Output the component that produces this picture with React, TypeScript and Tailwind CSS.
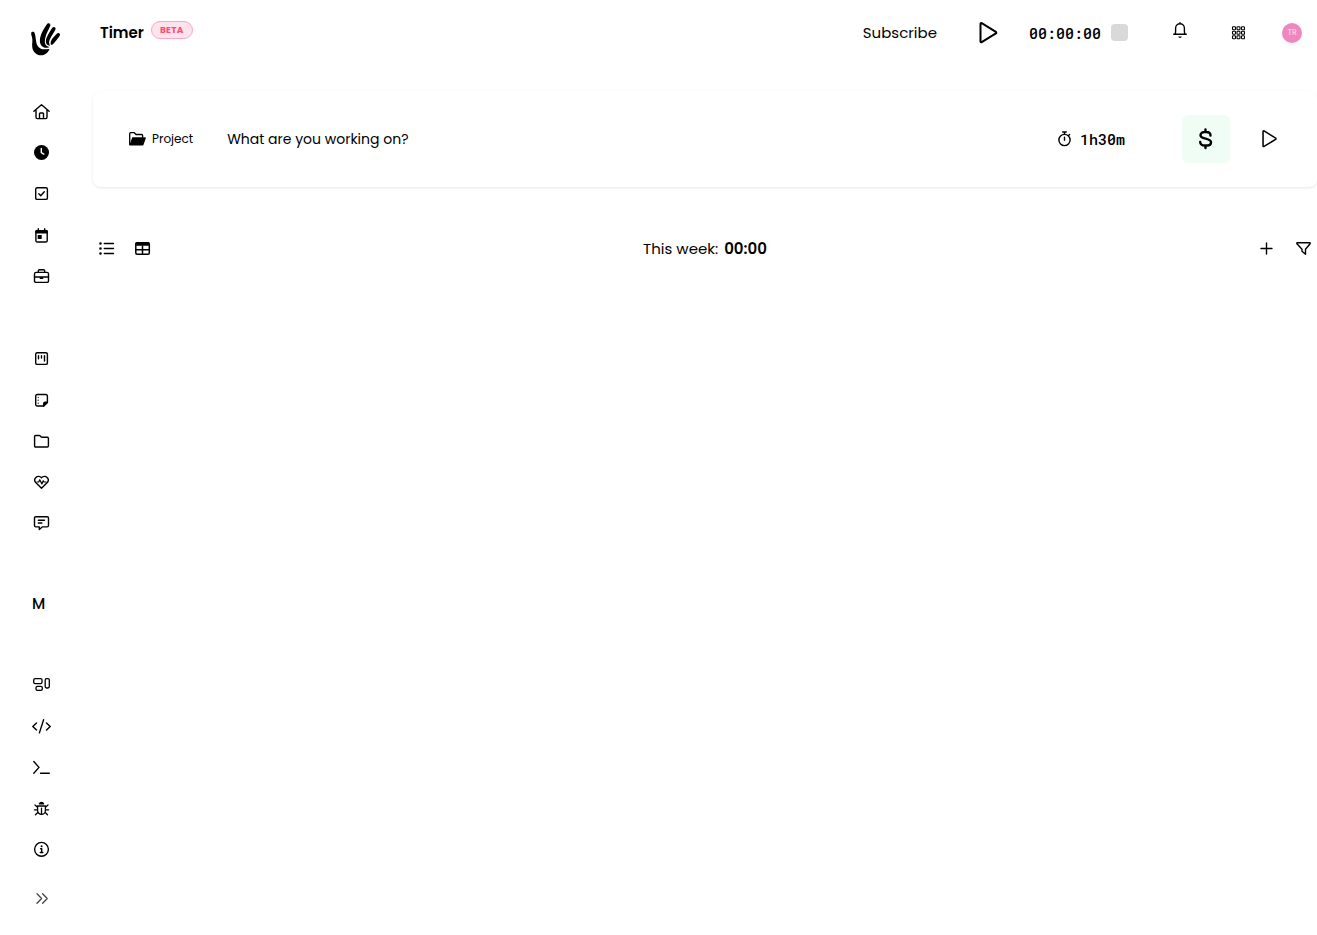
import type { ReactNode } from "react";

type IconProps = { children: ReactNode; box?: string; className?: string; weight?: number };
type NavItem = { label: string; icon: ReactNode };

function Icon({ children, box = "0 0 17 17", className = "h-[17px] w-[17px]", weight = 1.4 }: IconProps) {
  return (
    <svg
      viewBox={box}
      fill="none"
      stroke="currentColor"
      strokeWidth={weight}
      strokeLinecap="round"
      strokeLinejoin="round"
      className={className}
      aria-hidden="true"
    >
      {children}
    </svg>
  );
}

const mainNav: NavItem[] = [
  {
    label: "Home",
    icon: (
      <Icon>
        <path d="M.9 8.300 8.500 1.700l7.600 6.600M3 7v7.300a1.300 1.300 0 0 0 1.300 1.300h8.400a1.300 1.300 0 0 0 1.300-1.300V7M6.500 15.500v-4.700a.8.8 0 0 1 .8-.8h2.400a.8.8 0 0 1 .8.800v4.700" />
      </Icon>
    ),
  },
  {
    label: "Timer",
    icon: (
      <Icon>
        <circle cx="8.500" cy="8.500" r="7.500" fill="currentColor" stroke="none" />
        <path d="M8.300 4.500v4.200l2.500 1.500" stroke="white" strokeWidth="1.400" />
      </Icon>
    ),
  },
  {
    label: "Tasks",
    icon: (
      <Icon>
        <rect x="2.700" y="2.700" width="11.700" height="11.700" rx="1.500" />
        <path d="m5.800 8.800 1.900 1.900 3.600-4" />
      </Icon>
    ),
  },
  {
    label: "Calendar",
    icon: (
      <Icon>
        <rect x="2.900" y="4.600" width="11.300" height="11.400" rx="1.300" />
        <path d="M2.300 7.500V5.300a1.300 1.300 0 0 1 1.300-1.300h9.900a1.300 1.300 0 0 1 1.300 1.300v2.200z" fill="currentColor" stroke="none" />
        <path d="M5.300 2.700v2M11.700 2.700v2" />
        <path d="M4.700 9h4v4h-4z" fill="currentColor" stroke="none" />
      </Icon>
    ),
  },
  {
    label: "Work",
    icon: (
      <Icon>
        <rect x="1.500" y="5.400" width="14" height="10" rx="1.500" />
        <path d="M5.300 5.200V4a1.300 1.300 0 0 1 1.300-1.300h3.800A1.300 1.300 0 0 1 11.700 4v1.200M1.500 10h14M7.300 11.300h2.400" />
      </Icon>
    ),
  },
];

const toolNav: NavItem[] = [
  {
    label: "Boards",
    icon: (
      <Icon>
        <rect x="2.700" y="2.700" width="11.700" height="11.700" rx="1.500" />
        <path d="M5.500 5.800v3M8.500 5.800v2.200M11.500 5.800v5.200" />
      </Icon>
    ),
  },
  {
    label: "Notes",
    icon: (
      <Icon>
        <path d="M14.400 11.500V5a1.500 1.500 0 0 0-1.500-1.500H4.200A1.500 1.500 0 0 0 2.700 5v8.500A1.500 1.500 0 0 0 4.200 15h6.500z" />
        <path d="M14.400 11.300h-2.200a1.500 1.500 0 0 0-1.500 1.500V15z" fill="currentColor" />
        <path d="M5.200 6.300v.01M5.200 9.200v.01M5.200 12.200v.01" strokeWidth="1.300" />
      </Icon>
    ),
  },
  {
    label: "Files",
    icon: (
      <Icon>
        <path d="M1.600 14V4.500a1 1 0 0 1 1-1h3.700a1 1 0 0 1 .7.300l1.200 1.200a1 1 0 0 0 .7.300h5.500a1 1 0 0 1 1 1V14a1 1 0 0 1-1 1H2.600a1 1 0 0 1-1-1z" />
      </Icon>
    ),
  },
  {
    label: "Health",
    icon: (
      <Icon>
        <path d="M8.500 4.800C7 3 4.400 3 2.900 4.500S1.400 8 2.700 9.400l5.800 5.900 5.800-5.900c1.300-1.400 1.300-3.400-.2-4.900S10 3 8.500 4.800z" />
        <path d="M3.800 9h1.800l1.200-2.300 2.100 4.200 1.300-3.200.8 1.300h2.200" strokeWidth="1.200" />
      </Icon>
    ),
  },
  {
    label: "Messages",
    icon: (
      <Icon>
        <path d="M2.800 2.700h11.400a1.300 1.300 0 0 1 1.300 1.300v7.600a1.300 1.300 0 0 1-1.300 1.300H9.200L6.300 15.500v-2.600H2.800a1.300 1.300 0 0 1-1.300-1.300V4a1.300 1.300 0 0 1 1.300-1.300z" />
        <path d="M5.300 6.300h6.200M5.300 9h3.600" />
      </Icon>
    ),
  },
];

const helpNav: NavItem[] = [
  {
    label: "Layout",
    icon: (
      <Icon weight={1.3}>
        <rect x=".7" y="2.700" width="8.300" height="5" rx="1.400" />
        <rect x="3" y="10.300" width="6.300" height="4" rx="1.400" />
        <rect x="12.200" y="2.700" width="4.100" height="9.300" rx="1.400" />
      </Icon>
    ),
  },
  {
    label: "Code",
    icon: (
      <Icon box="0 0 19 19" className="h-[19px] w-[19px]">
        <path d="M4.500 6.900.8 10.500l3.700 3.600M14.500 6.900l3.700 3.600-3.700 3.600M7.400 16.900l4.200-13.200" />
      </Icon>
    ),
  },
  {
    label: "Terminal",
    icon: (
      <Icon>
        <path d="M.8 3.500 6 9.400.8 15.200M7.500 15.300h8.800" />
      </Icon>
    ),
  },
  {
    label: "Report a bug",
    icon: (
      <Icon weight={1.3}>
        <path d="M6.400 4.800a2.300 2.300 0 0 1 4.200 0z" fill="currentColor" />
        <path d="M4.600 7h7.800v4.500a3.900 3.900 0 0 1-7.800 0zM8.500 9.200v5M4.500 8.200 2 6M12.500 8.200 15 6M4.500 10.800H1.400M12.500 10.800h3.100M5 13.300l-2.500 2.500M12 13.300l2.500 2.500" />
      </Icon>
    ),
  },
  {
    label: "About",
    icon: (
      <Icon>
        <circle cx="8.500" cy="9.300" r="6.900" />
        <circle cx="8.600" cy="6.300" r="1" fill="currentColor" stroke="none" />
        <path d="M7.600 8.800h1.100v3.500M7.300 12.500h2.600" />
      </Icon>
    ),
  },
];

function Logo() {
  return (
    <svg viewBox="0 0 30 34" className="h-[34px] w-[30px]" fill="none" stroke="currentColor" strokeLinecap="round" strokeLinejoin="round" aria-hidden="true">
      <path d="M.2 10.300C.4 8.400 3 8.300 3.700 10.200c1 2.800 1 6 1.500 8.700.8 4.300 3.600 7 7.400 7.400 2.200.2 4.300-.4 5.900-.3-1 2.800-4 6.300-8.500 6.300C5.500 32.300 2 29 1.300 24.500c-.6-4.300.7-6.500-.3-10.300-.4-1.500-.9-2.600-.8-3.900z" fill="currentColor" stroke="none" />
      <path d="M16 1.100c1-1.600 3.800-.7 3.300 1.400-.3 1.300-3.600 7.500-4.700 11.200-1 3.400-1.200 7 .6 8.700 1 1 2.400 1.100 3.400 1.600-1.200 1-5.500 1.400-7.900-1-2.600-2.600-2.100-7.300-.5-11.700C11.600 7.500 14.300 3.800 16 1.100z" fill="currentColor" stroke="none" />
      <path d="M21.300 4.800c1-1.500 3.800-.7 3.200 1.400-.4 1.400-4.300 7.300-5.700 10.300-1 2.200-1.100 4 .5 6.300-3 0-4.700-2-4.400-5.200.3-3.500 4.500-9.800 6.400-12.800z" fill="currentColor" stroke="none" />
      <path d="M26 10.500c1.300-1.400 3.700-.2 2.900 1.700-1 2.200-4.600 6.200-6.500 8.600-1 1.300-2.500 1.200-2.700.1-.4-2 .8-4.500 2.600-6.400 1.200-1.400 2.500-2.600 3.700-4z" fill="currentColor" stroke="none" />
    </svg>
  );
}

function PlayIcon({ className, weight }: { className: string; weight: number }) {
  return (
    <Icon box="0 0 20 22" className={className} weight={weight}>
      <path d="M1.500 1.800v17.600a.8.8 0 0 0 1.200.7l14.200-8.700a.9.9 0 0 0 0-1.500L2.700 1.100a.8.8 0 0 0-1.200.7z" />
    </Icon>
  );
}

function NavGroup({ items }: { items: NavItem[] }) {
  return (
    <ul className="flex flex-col">
      {items.map(({ label, icon }) => (
        <li key={label}>
          <a href="#" aria-label={label} className="flex h-[41px] items-center justify-center">
            {icon}
          </a>
        </li>
      ))}
    </ul>
  );
}

function IconButton({ label, children, className = "" }: { label: string; children?: ReactNode; className?: string }) {
  return (
    <button type="button" aria-label={label} className={`flex shrink-0 items-center justify-center ${className}`}>
      {children}
    </button>
  );
}

export default function App() {
  return (
    <div className="flex min-h-screen bg-white font-[Poppins,Inter,sans-serif] text-black">
      <aside className="flex w-[83px] shrink-0 flex-col">
        <a href="#" aria-label="Dashboard" className="mt-[23px] mb-[34px] flex pl-[31px]">
          <Logo />
        </a>
        <nav aria-label="Main" className="flex flex-col">
          <NavGroup items={mainNav} />
          <div className="pt-[42px]">
            <NavGroup items={toolNav} />
          </div>
          <a href="#" className="mt-[41px] flex h-[41px] items-center pl-8 text-[15px] font-medium">M</a>
          <div className="pt-[39px]">
            <NavGroup items={helpNav} />
          </div>
          <IconButton label="Expand menu" className="mt-2 h-[41px] text-[#444444]">
            <Icon weight={1.3}>
              <path d="m4 4.800 4.600 4.700L4 14.200M9.600 4.800l4.600 4.700-4.600 4.700" />
            </Icon>
          </IconButton>
        </nav>
      </aside>

      <main className="flex min-w-0 flex-1 flex-col pl-[10px]">
        <header className="flex h-[66px] items-center justify-between pr-[15px] pl-[7px]">
          <div className="flex items-center gap-[7px]">
            <h1 className="text-[15px] font-semibold">Timer</h1>
            <span className="mb-[6px] rounded-full border border-[#f9a8c4] bg-[#fde4ec] px-2 text-[9px] leading-4 font-bold tracking-wide text-[#ff4d76]">BETA</span>
          </div>
          <div className="flex items-center">
            <a href="#" className="mr-[42px] text-[15px]">Subscribe</a>
            <IconButton label="Start timer">
              <PlayIcon className="h-[22px] w-5" weight={2} />
            </IconButton>
            <time className="ml-[30px] font-['Roboto_Mono','DejaVu_Sans_Mono',monospace] text-[15px] font-medium">00:00:00</time>
            <IconButton label="Stop timer" className="mb-[2px] ml-[10px] h-[17px] w-[17px] rounded bg-[#d9d9d9]" />
            <IconButton label="Notifications" className="mb-[6px] ml-11">
              <Icon box="0 0 16 18" className="h-[18px] w-4">
                <path d="M1.700 13.300h12.600M3 13.300c.5-.8.600-1.800.6-3V7.200a4.400 4.400 0 0 1 8.800 0v3.100c0 1.200.1 2.200.6 3M8 2.700V1.800" />
                <path d="M6.300 15.600h3.400a1.700 1.300 0 0 1-3.400 0z" fill="currentColor" stroke="none" />
              </Icon>
            </IconButton>
            <IconButton label="Apps" className="ml-[43px]">
              <Icon box="0 0 14 14" className="h-[14px] w-[14px]" weight={1.1}>
                {[0.8, 5.3, 9.8].map((y) => [1.5, 6, 10.500].map((x) => <rect key={`${x}-${y}`} x={x} y={y} width="3" height="3" rx=".8" />))}
              </Icon>
            </IconButton>
            <IconButton label="Account" className="ml-[37px] h-5 w-5 rounded-full bg-[#ee87be] font-[Inter,sans-serif] text-[7px] text-white/80 shadow-md shadow-black/5">TR</IconButton>
          </div>
        </header>

        <section aria-label="New entry" className="mt-[25px] flex h-24 items-center rounded-lg pr-[38px] pl-9 shadow-[0_1px_3px_rgba(0,0,0,0.1)]">
          <button type="button" className="flex items-center gap-[6px] text-[12px]">
            <Icon box="0 0 17 14" className="h-[14px] w-[17px]" weight={1.3}>
              <path d="M.7 12.500V1.700a1 1 0 0 1 1-1h3.600L7 2.500h5.600a1 1 0 0 1 1 1V5" />
              <path d="M1.200 12.900 3.700 6h12.500l-2.400 6.900z" fill="currentColor" />
            </Icon>
            Project
          </button>
          <input
            aria-label="Description"
            placeholder="What are you working on?"
            className="ml-[34px] min-w-0 flex-1 text-[14px] outline-none placeholder:text-black"
          />
          <Icon box="0 0 16 16" className="h-4 w-4 shrink-0">
            <circle cx="8.500" cy="9" r="5.600" />
            <path d="M6.700 1h3.600M8.500 1.300v2M8.500 6.200v3M12.600 4.600l1-1" />
          </Icon>
          <input
            aria-label="Duration"
            defaultValue="1h30m"
            className="ml-2 w-[86px] font-['Roboto_Mono','DejaVu_Sans_Mono',monospace] text-[15px] font-medium outline-none"
          />
          <IconButton label="Billable" className="ml-4 h-12 w-12 rounded-md bg-green-50">
            <Icon box="0 0 24 24" className="h-6 w-6" weight={2.4}>
              <path d="M16.500 8.500C16.500 6.300 14.700 5 12.300 5H10.500C8.300 5 6.500 6.300 6.500 8.200c0 4.300 10.500 2.500 10.500 7 0 2-1.700 3.300-4.200 3.300h-2.300c-2.400 0-4.300-1.300-4.300-3.500M11.500 2.500V5M11.500 18.500V21" />
            </Icon>
          </IconButton>
          <IconButton label="Start" className="ml-[31px]">
            <PlayIcon className="h-[18px] w-[18px]" weight={1.9} />
          </IconButton>
        </section>

        <div className="mt-[50px] grid h-6 grid-cols-[1fr_auto_1fr] items-center px-[5px]">
          <div className="flex gap-5 pl-px">
            <IconButton label="List view">
              <Icon box="0 0 16 16" className="h-4 w-4">
                <path d="M5.300 2.500h9.200M5.300 7.500h9.200M5.300 12.500h9.200" />
                <path d="M1.500 2.500v.01M1.500 7.500v.01M1.500 12.500v.01" strokeWidth="2.600" />
              </Icon>
            </IconButton>
            <IconButton label="Table view">
              <Icon box="0 0 16 16" className="h-4 w-4" weight={1.5}>
                <rect x=".8" y="1.800" width="13.500" height="11.400" rx="1.200" />
                <path d="M1.400 1.700h12.300v2.500H1.400z" fill="currentColor" strokeWidth="1" />
                <path d="M1 8.800h13M7.500 5v8" />
              </Icon>
            </IconButton>
          </div>
          <p className="flex gap-[6px] text-[15px]">
            This week: <strong className="font-semibold">00:00</strong>
          </p>
          <div className="flex justify-end gap-[21px]">
            <IconButton label="Add entry">
              <Icon box="0 0 16 16" className="h-4 w-4">
                <path d="M7.500 2v11M2 7.500h11" />
              </Icon>
            </IconButton>
            <IconButton label="Filter">
              <Icon box="0 0 16 16" className="h-4 w-4">
                <path d="M.9 1.700h13.200v1.100L9.500 8.300v4.900L6 10.300v-2L.9 2.800z" />
              </Icon>
            </IconButton>
          </div>
        </div>
      </main>
    </div>
  );
}
